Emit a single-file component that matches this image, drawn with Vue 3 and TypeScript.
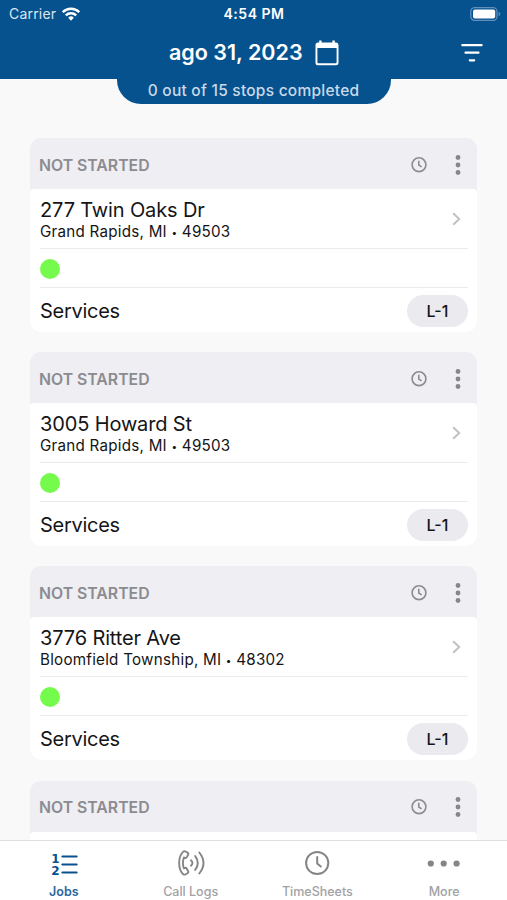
<script setup lang="ts">
interface Stop {
  id: number
  street?: string
  city?: string
  zip?: string
  service?: string
}

const stops: Stop[] = [
  { id: 1, street: '277 Twin Oaks Dr', city: 'Grand Rapids, MI', zip: '49503', service: 'L-1' },
  { id: 2, street: '3005 Howard St', city: 'Grand Rapids, MI', zip: '49503', service: 'L-1' },
  { id: 3, street: '3776 Ritter Ave', city: 'Bloomfield Township, MI', zip: '48302', service: 'L-1' },
  { id: 4 },
]
</script>

<template>
  <div class="screen">
    <header class="header">
      <div class="status">
        <div class="carrier">
          <span>Carrier</span>
          <svg width="18" height="14" viewBox="0 0 18 14" fill="none" stroke="#fff" stroke-width="2.4">
            <path d="M.8 5.2a11.6 11.6 0 0 1 16.4 0" />
            <path d="M3.8 8.4a7.4 7.4 0 0 1 10.4 0" />
            <path d="M9 13.7 6.2 10.7a4 4 0 0 1 5.6 0Z" fill="#fff" stroke="none" />
          </svg>
        </div>
        <span class="time">4:54 PM</span>
        <svg class="battery" width="31" height="14" viewBox="0 0 31 14">
          <rect x=".8" y=".6" width="26.2" height="12.8" rx="4" fill="none" stroke="#5f8fba" stroke-width="1.3" />
          <rect x="3" y="2.6" width="22.2" height="8.8" rx="2" fill="#fff" />
          <path d="M28.7 4.8c2 .6 2 3.8 0 4.4Z" fill="#5f8fba" />
        </svg>
      </div>
      <div class="title-row">
        <h1>ago 31, 2023</h1>
        <svg class="calendar" width="24" height="26" viewBox="0 0 24 26">
          <path fill="#fff" fill-rule="evenodd" d="M4.2.5h2.4v2h10.8v-2h2.4v2h1.4A2.5 2.5 0 0 1 23.5 5v17.7a2.5 2.5 0 0 1-2.5 2.5H3a2.5 2.5 0 0 1-2.5-2.5V5A2.5 2.5 0 0 1 3 2.5h1.2ZM2.400 8v14.300a.9.9 0 0 0 .9.9h17.400a.9.9 0 0 0 .9-.9V8Z" />
        </svg>
        <svg class="filter" width="22" height="20" viewBox="0 0 22 20" fill="none" stroke="#fff" stroke-width="2.2" stroke-linecap="round">
          <path d="M1.3 2.2h19.3M4.5 9.700h13M8.800 17.300h4.400" />
        </svg>
      </div>
    </header>
    <div class="progress">0 out of 15 stops completed</div>

    <main class="list">
      <article v-for="stop in stops" :key="stop.id" class="card">
        <div class="card-head">
          <span class="state">NOT STARTED</span>
          <svg class="clock" width="16" height="16" viewBox="0 0 16 16" fill="none" stroke="#8b8b90" stroke-width="1.6">
            <circle cx="8" cy="7.7" r="6.9" />
            <path d="M7.8 3.7V8l2.8 1.8" />
          </svg>
          <svg class="kebab" width="6" height="20" viewBox="0 0 6 20" fill="#86868b">
            <circle cx="3" cy="2.5" r="2.4" />
            <circle cx="3" cy="10" r="2.4" />
            <circle cx="3" cy="17.5" r="2.4" />
          </svg>
        </div>
        <div class="card-body">
          <template v-if="stop.street">
            <div class="address">
              <div class="place">
                <div class="street">{{ stop.street }}</div>
                <div class="city">{{ stop.city }} <span class="bullet">•</span> {{ stop.zip }}</div>
              </div>
              <svg class="chevron" width="9" height="14" viewBox="0 0 9 14" fill="none" stroke="#c2c2c5" stroke-width="2">
                <path d="m1.2 1.2 6 5.8-6 5.8" />
              </svg>
            </div>
            <div class="marker"><i class="dot"></i></div>
            <div class="services">
              <span class="services-label">Services</span>
              <span class="pill">{{ stop.service }}</span>
            </div>
          </template>
        </div>
      </article>
    </main>

    <nav class="tabs">
      <div class="tab active">
        <svg class="jobs-icon" width="28" height="26" viewBox="0 0 28 26">
          <path d="M11.4 4.5h14.2M11.4 12.500h14.200M11.400 20.500h14.200" fill="none" stroke="#08518f" stroke-width="2.2" stroke-linecap="round" />
          <g class="digits" fill="#08518f">
            <text x="0.200" y="10.500">1</text>
            <text x="0.200" y="23">2</text>
          </g>
        </svg>
        <span>Jobs</span>
      </div>
      <div class="tab">
        <svg width="30" height="26" viewBox="-1 0 30 26" fill="none" stroke="#858585" stroke-width="1.9" stroke-linecap="round" stroke-linejoin="round">
          <path d="M6.300 1.600C.800 6.500.800 19.500 6.300 24.200c.6.500 1.500.5 2.300.1l1.900-1.100c.8-.5 1-1.300.6-2.100l-1.300-2.400c-.4-.8-1.300-1-2.100-.7l-.8.300c-1.200-3.200-1.200-7.600 0-10.800l.8.300c.8.300 1.700.1 2.100-.7l1.300-2.400c.4-.8.200-1.600-.6-2.100L8.600 1.500c-.8-.4-1.700-.4-2.300.1Z" />
          <path d="M14 10.300q2.900 2.700 0 5.400M18.200 6.100q5.200 6.900 0 13.800M22.300 2.500q8.400 10.500 0 21" />
        </svg>
        <span>Call Logs</span>
      </div>
      <div class="tab">
        <svg width="28" height="26" viewBox="0 0 28 26" fill="none" stroke="#858585" stroke-width="2">
          <circle cx="14.200" cy="13" r="11.100" />
          <path d="M14.200 7v6.500l3.600 3" stroke-linecap="round" />
        </svg>
        <span>TimeSheets</span>
      </div>
      <div class="tab">
        <svg width="34" height="26" viewBox="0 0 34 26" fill="#858585">
          <circle cx="3.800" cy="13.500" r="3.100" />
          <circle cx="16.700" cy="13.500" r="3.100" />
          <circle cx="29.600" cy="13.500" r="3.100" />
        </svg>
        <span>More</span>
      </div>
    </nav>
  </div>
</template>

<style>
body {
  margin: 0;
  background: #f9f9fa;
}
</style>

<style scoped>
.screen {
  width: 507px;
  height: 900px;
  overflow: hidden;
  display: flex;
  flex-direction: column;
  background: #f9f9fa;
  font-family: Inter, "Liberation Sans", sans-serif;
  color: #151517;
}
svg {
  display: block;
  flex: none;
}
.header {
  height: 79px;
  flex: none;
  background: #06528f;
  color: #fff;
}
.status {
  height: 27px;
  padding: 0 6px 0 9px;
  display: grid;
  grid-template-columns: 1fr auto 1fr;
  align-items: center;
  font-size: 14px;
  line-height: 27px;
}
.carrier {
  display: flex;
  gap: 6px;
  align-items: center;
  color: #dbe6f0;
  letter-spacing: 0.2px;
}
.time {
  padding-right: 2px;
  font-size: 14px;
  font-weight: 600;
  letter-spacing: 0.5px;
}
.battery {
  justify-self: end;
}
.title-row {
  height: 52px;
  display: flex;
  align-items: center;
  padding: 0 24.5px 0 169px;
}
h1 {
  margin: 0;
  width: 146px;
  font-size: 21.5px;
  line-height: 50px;
  padding-bottom: 2px;
  font-weight: 600;
  white-space: nowrap;
}
.calendar,
.filter {
  margin-bottom: 1px;
}
.filter {
  margin-left: auto;
}
.progress {
  width: 274px;
  height: 24.5px;
  margin-bottom: 0.5px;
  flex: none;
  align-self: center;
  border-radius: 0 0 24px 24px;
  background: #06528f;
  color: #c9d9e8;
  font-size: 15.5px;
  letter-spacing: 0.24px;
  line-height: 23px;
  font-weight: 500;
  text-align: center;
  white-space: nowrap;
}
.list {
  flex: 1;
  min-height: 0;
  overflow: hidden;
  padding: 34px 30px 0;
  display: flex;
  flex-direction: column;
  gap: 20.2px;
}
.card {
  height: 194px;
  flex: none;
  border-radius: 11px;
  overflow: hidden;
  background: #efeef3;
}
.card-head {
  height: 51px;
  padding: 0 16px 0 9px;
  display: flex;
  align-items: center;
}
.state {
  margin-top: 3px;
  font-size: 15.8px;
  font-weight: 600;
  color: #8b8b90;
}
.clock {
  margin: 2px 28px 0 auto;
}
.kebab {
  margin-top: 2px;
}
.card-body {
  height: 143px;
  box-sizing: border-box;
  padding: 0 9px 0 10px;
  background: #fff;
  border-radius: 4px 4px 0 0;
}
.address {
  height: 60px;
  box-sizing: border-box;
  border-bottom: 1px solid #ebebed;
  display: flex;
  align-items: center;
  justify-content: space-between;
  padding-right: 7px;
  white-space: nowrap;
}
.place {
  padding-top: 2px;
}
.street {
  font-size: 20px;
  letter-spacing: -0.14px;
  line-height: 24px;
}
.city {
  font-size: 15.2px;
  letter-spacing: 0.24px;
  line-height: 19px;
}
.bullet {
  font-size: 10px;
  line-height: 1;
  vertical-align: 1px;
}
.marker {
  height: 39px;
  box-sizing: border-box;
  border-bottom: 1px solid #ebebed;
  display: flex;
  align-items: center;
}
.dot {
  width: 20px;
  height: 20px;
  margin-top: 1px;
  border-radius: 50%;
  background: #75fb4c;
}
.services {
  height: 45px;
  display: flex;
  align-items: center;
  justify-content: space-between;
}
.services-label {
  font-size: 20px;
  letter-spacing: -0.28px;
}
.pill {
  width: 61px;
  height: 32px;
  border-radius: 16px;
  background: #ebebef;
  font-size: 16px;
  font-weight: 500;
  line-height: 32px;
  text-align: center;
}
.tabs {
  height: 60px;
  box-sizing: border-box;
  flex: none;
  border-top: 1px solid #dededf;
  background: #fff;
  display: grid;
  grid-template-columns: repeat(4, 1fr);
  padding: 9px 0 0;
}
.tab {
  display: flex;
  flex-direction: column;
  align-items: center;
  padding-left: 1px;
  color: #a2a2a4;
  font-size: 12.5px;
  font-weight: 500;
  line-height: 15px;
  gap: 8px;
}
.jobs-icon {
  margin: 2px 0 -2px 2px;
}
.digits {
  font: 700 12px "DejaVu Sans", sans-serif;
}
.active {
  color: #2a679f;
  font-weight: 600;
}
</style>
